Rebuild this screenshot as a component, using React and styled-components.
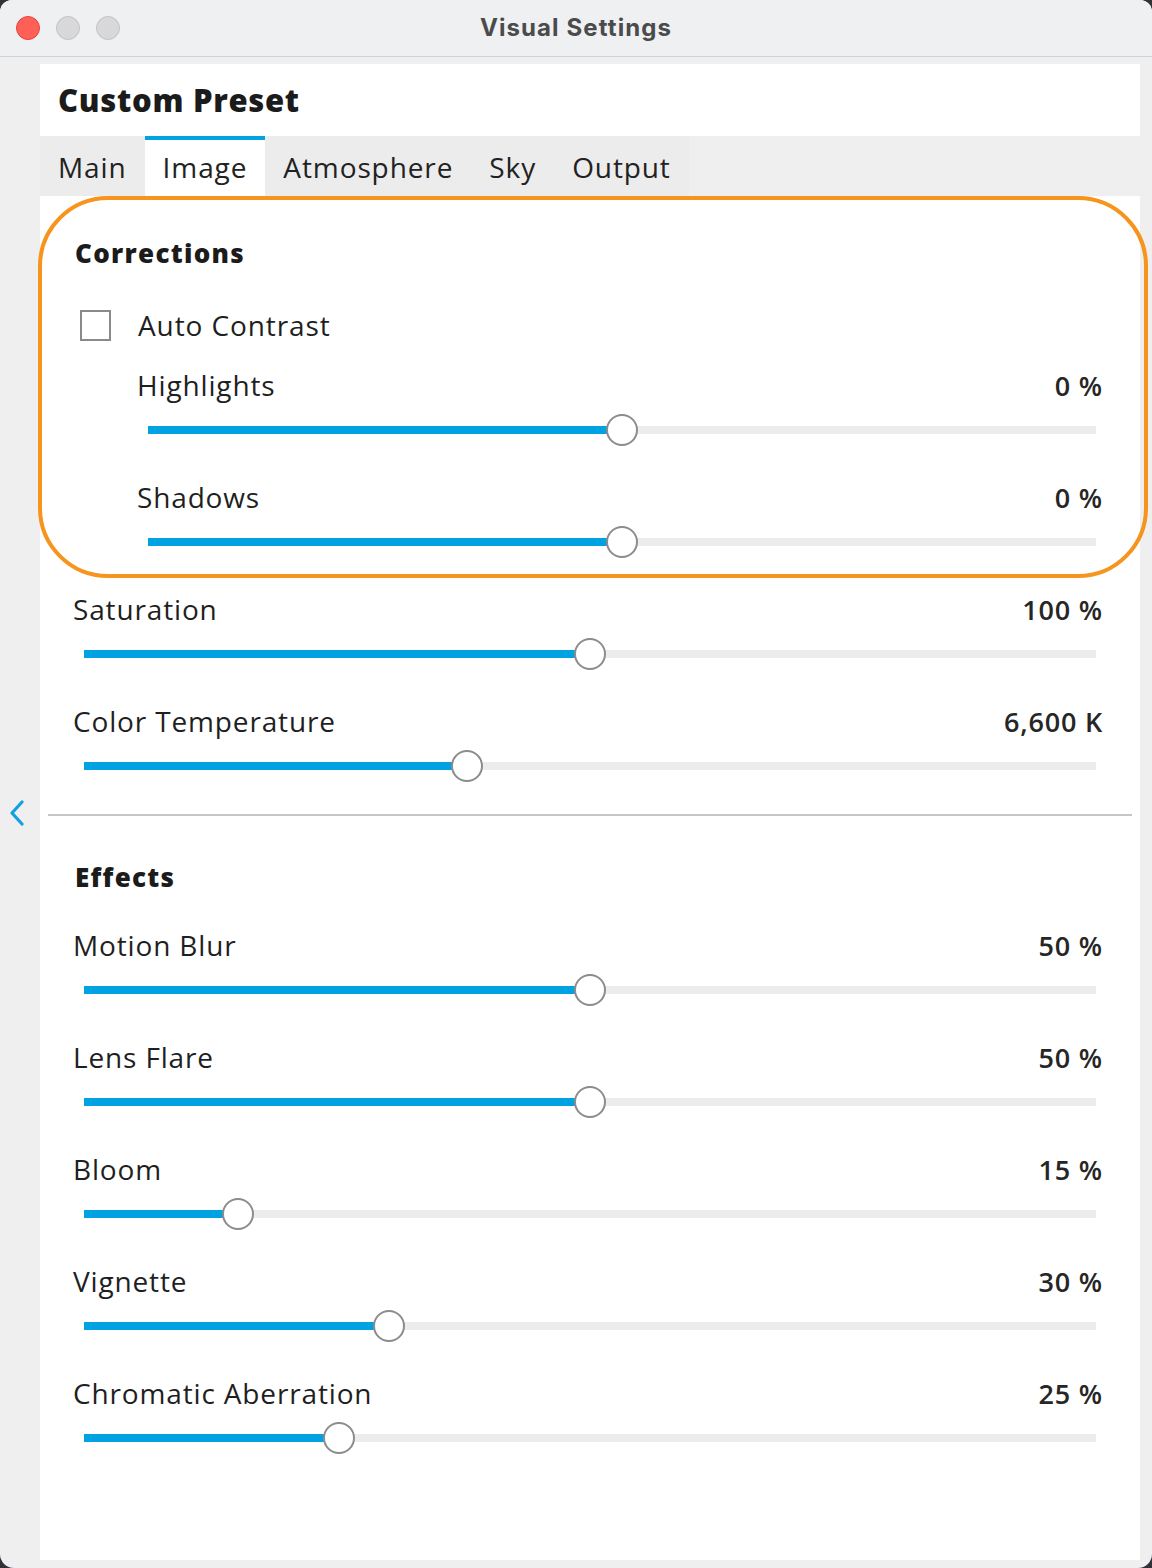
import styled, { createGlobalStyle } from 'styled-components'

const GlobalStyle = createGlobalStyle`
    html, body {
        margin: 0;
        padding: 0;
        background: #2f3338;
    }
    * {
        box-sizing: border-box;
    }
`

const font = `'Open Sans', 'Noto Sans', sans-serif`

const Window = styled.div`
    width: 1152px;
    height: 1568px;
    border-radius: 12px 12px 14px 14px;
    overflow: hidden;
    background: #efefef;
    display: flex;
    flex-direction: column;
    font-family: ${font};
    color: #1f1f1f;
`

const TitleBar = styled.div`
    height: 57px;
    flex-shrink: 0;
    background: #eff0f2;
    border-bottom: 1px solid #d2d2d4;
    display: grid;
    grid-template-columns: 1fr auto 1fr;
    align-items: center;
    padding: 0 16px;
`

const Lights = styled.div`
    display: flex;
    gap: 16px;
`

const Light = styled.span`
    width: 24px;
    height: 24px;
    border-radius: 50%;
    background: ${({ red }) => (red ? '#fe5f57' : '#d8d8da')};
    border: 1px solid ${({ red }) => (red ? '#e2463f' : '#c3c3c5')};
`

const Title = styled.div`
    font-family: Inter, 'Liberation Sans', sans-serif;
    font-weight: 700;
    font-size: 24px;
    letter-spacing: 1.1px;
    color: #4b4b4b;
    margin-top: -2px;
`

const Body = styled.div`
    flex: 1;
    display: flex;
`

const Sidebar = styled.div`
    width: 40px;
    display: flex;
    align-items: center;
    justify-content: center;
    padding-right: 6px;
`

const Panel = styled.div`
    width: 1100px;
    margin: 7px 0 8px;
    background: #fff;
    display: flex;
    flex-direction: column;
`

const Header = styled.div`
    height: 72px;
    padding-left: 18px;
    display: flex;
    align-items: center;
    font-size: 31px;
    font-weight: 800;
    color: #1b1b1b;
    letter-spacing: 0.7px;
`

const TabBar = styled.div`
    height: 60px;
    background: #efefef;
    display: flex;
`

const Tab = styled.div`
    height: 60px;
    padding: 0 18px;
    display: flex;
    align-items: center;
    font-size: 28px;
    letter-spacing: 0.9px;
    color: #222;
    background: ${({ active }) => (active ? '#fff' : '#ececec')};
    border-top: 4px solid ${({ active }) => (active ? '#00a3e0' : 'transparent')};
    padding-bottom: 2px;
`

const Content = styled.div`
    position: relative;
    padding-top: 37px;
`

const Highlight = styled.div`
    position: absolute;
    top: 0;
    left: -2px;
    width: 1110px;
    height: 382px;
    border: 4px solid #f7941d;
    border-radius: 70px;
    pointer-events: none;
`

const SectionTitle = styled.div`
    height: 40px;
    line-height: 40px;
    padding-left: 35px;
    font-size: 26px;
    font-weight: 800;
    letter-spacing: 1.3px;
    color: #1b1b1b;
    margin-bottom: ${({ gap }) => gap}px;
`

const CheckRow = styled.label`
    height: 40px;
    display: flex;
    align-items: center;
    gap: 27px;
    padding-left: 40px;
    font-size: 28px;
    letter-spacing: 0.9px;
    margin-bottom: 20px;
`

const Box = styled.span`
    width: 31px;
    height: 31px;
    border: 2px solid #8a8a8a;
    background: #fff;
`

const Row = styled.div`
    height: 112px;
    padding-bottom: 22px;
`

const LabelRow = styled.div`
    height: 40px;
    display: flex;
    align-items: center;
    justify-content: space-between;
    padding-left: ${({ nested }) => (nested ? 97 : 33)}px;
    padding-right: 38px;
    font-size: 28px;
    letter-spacing: 0.85px;
    color: #1f1f1f;
`

const Value = styled.span`
    font-size: 27px;
    font-weight: 600;
    letter-spacing: 0.8px;
    color: #262626;
    margin-right: -1px;
`

const TrackZone = styled.div`
    height: 50px;
    display: flex;
    align-items: center;
    margin-left: ${({ nested }) => (nested ? 108 : 44)}px;
    margin-right: 44px;
`

const Track = styled.div`
    position: relative;
    flex: 1;
    height: 8px;
    background: #ececec;
    display: flex;
`

const Fill = styled.div`
    height: 100%;
    background: #00a3e2;
`

const Thumb = styled.span`
    position: absolute;
    top: 50%;
    width: 32px;
    height: 32px;
    margin: -16px 0 0 -16px;
    border-radius: 50%;
    background: #fff;
    border: 2px solid #8c8c8c;
`

const Divider = styled.div`
    height: 2px;
    margin: 1px 8px 0;
    background: #c6c6c6;
    margin-bottom: 41px;
`

const Slider = ({ label, value, pos, nested }) => (
    <Row>
        <LabelRow nested={nested}>
            <span>{label}</span>
            <Value>{value}</Value>
        </LabelRow>
        <TrackZone nested={nested}>
            <Track>
                <Fill style={{ width: `${pos * 100}%` }} />
                <Thumb style={{ left: `${pos * 100}%` }} />
            </Track>
        </TrackZone>
    </Row>
)

const tabs = ['Main', 'Image', 'Atmosphere', 'Sky', 'Output']

const corrections = [
    { label: 'Highlights', value: '0 %', pos: 0.5, nested: true },
    { label: 'Shadows', value: '0 %', pos: 0.5, nested: true },
    { label: 'Saturation', value: '100 %', pos: 0.5 },
    { label: 'Color Temperature', value: '6,600 K', pos: 0.378 },
]

const effects = [
    { label: 'Motion Blur', value: '50 %', pos: 0.5 },
    { label: 'Lens Flare', value: '50 %', pos: 0.5 },
    { label: 'Bloom', value: '15 %', pos: 0.152 },
    { label: 'Vignette', value: '30 %', pos: 0.301 },
    { label: 'Chromatic Aberration', value: '25 %', pos: 0.252 },
]

export default function App() {
    return (
        <>
            <GlobalStyle />
            <Window>
                <TitleBar>
                    <Lights>
                        <Light red />
                        <Light />
                        <Light />
                    </Lights>
                    <Title>Visual Settings</Title>
                    <span />
                </TitleBar>
                <Body>
                    <Sidebar>
                        <svg width="16" height="26" viewBox="0 0 16 26">
                            <polyline
                                points="13,2 3,13 13,24"
                                fill="none"
                                stroke="#12a0e0"
                                strokeWidth="3.2"
                                strokeLinecap="round"
                                strokeLinejoin="round"
                            />
                        </svg>
                    </Sidebar>
                    <Panel>
                        <Header>Custom Preset</Header>
                        <TabBar>
                            {tabs.map((t) => (
                                <Tab key={t} active={t === 'Image'}>
                                    {t}
                                </Tab>
                            ))}
                        </TabBar>
                        <Content>
                            <Highlight />
                            <SectionTitle gap={32}>Corrections</SectionTitle>
                            <CheckRow>
                                <Box />
                                Auto Contrast
                            </CheckRow>
                            {corrections.map((s) => (
                                <Slider key={s.label} {...s} />
                            ))}
                            <Divider />
                            <SectionTitle gap={28}>Effects</SectionTitle>
                            {effects.map((s) => (
                                <Slider key={s.label} {...s} />
                            ))}
                        </Content>
                    </Panel>
                </Body>
            </Window>
        </>
    )
}
